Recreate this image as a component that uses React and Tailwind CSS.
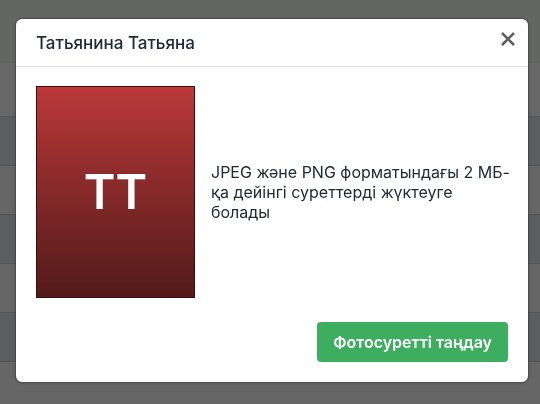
import { useRef, useState } from "react";

const rows = [1, 2, 3, 4, 5, 6];

function TableBackdrop() {
  return (
    <div className="h-screen overflow-hidden bg-[#666766]" aria-hidden="true">
      <div className="h-[63px] bg-[#646664] border-b border-[#616261]" />
      <div className="h-[54px] border-b border-[#535455]" />
      {rows.map((row) => (
        <div
          key={row}
          className="h-[49px] border-b border-[#535455] odd:bg-[#5c5e5f] even:bg-[#666666] last:border-b-0"
        />
      ))}
    </div>
  );
}

export default function App() {
  const [open, setOpen] = useState(true);
  const fileRef = useRef(null);

  return (
    <main className="min-h-screen font-['Inter','Noto_Sans',sans-serif] text-[#212b36]">
      <TableBackdrop />

      {open && (
        <div className="fixed inset-0 overflow-y-auto pl-4 pr-3 pt-[19px] pb-5">
          <section
            role="dialog"
            aria-labelledby="dialog-title"
            className="rounded-md bg-white shadow-[0_0_2px_1px_rgba(0,0,0,0.3)]"
          >
            <header className="flex items-start justify-between border-b border-[#dfdfdf] pl-5 pr-2 h-12">
              <h2 id="dialog-title" className="self-center text-[17px] leading-5 font-medium">
                Татьянина Татьяна
              </h2>
              <button
                type="button"
                aria-label="Жабу"
                onClick={() => setOpen(false)}
                className="mt-2 p-1 text-[#5d5d6b]"
              >
                <svg viewBox="0 0 16 16" className="size-4" fill="none" stroke="currentColor" strokeWidth="2.6">
                  <path d="M2 2l12 12M14 2L2 14" />
                </svg>
              </button>
            </header>

            <div className="flex items-center gap-4 pt-[19px] pl-5 pr-4">
              <div className="flex w-[159px] h-[212px] shrink-0 items-center justify-center border border-[#3d0c0e] bg-linear-to-b from-[#bb3839] to-[#531a1a] text-5xl font-semibold text-white">
                ТТ
              </div>
              <p className="text-base leading-5">
                JPEG және PNG форматындағы 2 МБ-қа дейінгі суреттерді жүктеуге болады
              </p>
            </div>

            <div className="flex justify-end px-5 pt-6 pb-5">
              <input
                ref={fileRef}
                type="file"
                accept="image/jpeg,image/png"
                aria-label="Фотосуретті таңдау"
                className="hidden"
              />
              <button
                type="button"
                onClick={() => fileRef.current.click()}
                className="h-10 rounded-sm bg-[#3dae60] px-4 text-base font-semibold text-white"
              >
                Фотосуретті таңдау
              </button>
            </div>
          </section>
        </div>
      )}
    </main>
  );
}
